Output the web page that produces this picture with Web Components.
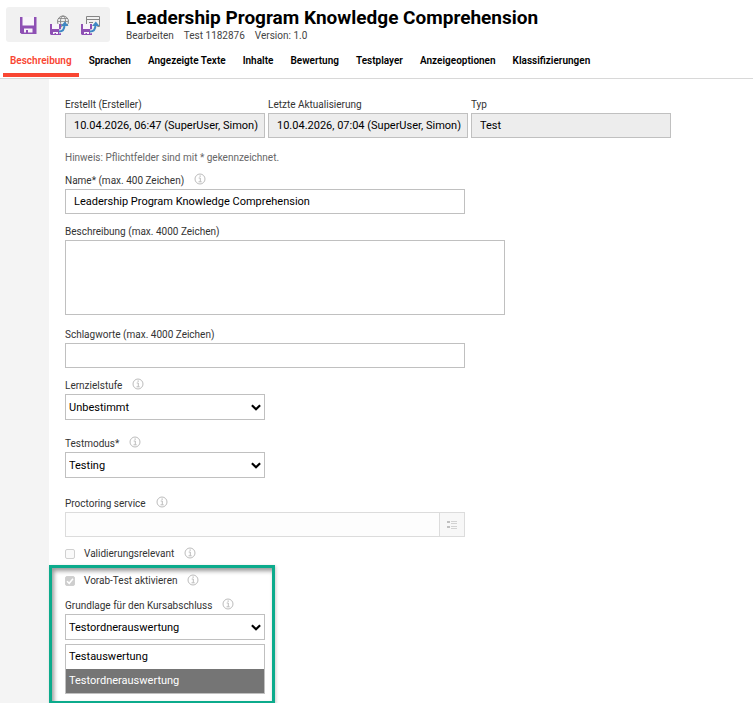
<!DOCTYPE html>
<html lang="de">
<head>
<meta charset="utf-8">
<meta name="viewport" content="width=device-width, initial-scale=1">
<title>Leadership Program Knowledge Comprehension</title>
<style>
  html, body { height: 100%; }
  body {
    margin: 0;
    background: #fff;
    color: #000;
    font-family: Roboto, "Liberation Sans", sans-serif;
    font-size: 11px;
    --label: #333;
    --line: #c0c0c0;
    --accent: #f94632;
  }
</style>
</head>
<body>
<test-editor></test-editor>

<script>
(() => {
  const FIELD_STYLES = `
    :host { display: block; }
    .head {
      height: 16px;
      display: flex;
      gap: 10px;
    }
    label {
      color: var(--label);
      font-size: 10px;
      line-height: 16px;
      white-space: nowrap;
    }
    input, textarea, select {
      width: 100%;
      box-sizing: border-box;
      margin: 0;
      border: 1px solid var(--line);
      border-radius: 0;
      background: #fff;
      color: #000;
      font: inherit;
      display: block;
    }
    input, select { height: 25px; }
  `;

  class BaseElement extends HTMLElement {
    constructor() {
      super();
      this.attachShadow({ mode: 'open' });
    }

    attr(name) {
      return this.getAttribute(name) || '';
    }

    connectedCallback() {
      this.shadowRoot.innerHTML = this.render();
    }
  }

  class InfoIcon extends BaseElement {
    render() {
      return `
        <style>
          :host { display: block; width: 12px; height: 12px; }
          svg { display: block; }
        </style>
        <svg width="12" height="12" viewBox="0 0 12 12" fill="none" stroke="#bcbcbc">
          <circle cx="6" cy="6" r="5" />
          <path d="M4.7 5H6.3V8.7M4.5 8.8H7.7" />
          <path d="M5.5 3.1H6.8" stroke-width="1.2" />
        </svg>
      `;
    }
  }

  class TextField extends BaseElement {
    render() {
      const value = this.attr('value');
      const state = this.hasAttribute('readonly') ? 'readonly' : this.hasAttribute('disabled') ? 'disabled' : '';
      const control = this.hasAttribute('multiline')
        ? `<textarea id="control">${value}</textarea>`
        : `<input id="control" type="text" value="${value}" ${state}>`;

      return `
        <style>
          ${FIELD_STYLES}
          input { padding: 0 0 0 8px; }
          input:read-only { background: #ededed; }
          input:disabled { border-color: #dcdcdc; background: #fdfdfd; }
          textarea { height: 75px; padding: 4px 8px; resize: none; }
          .row { display: flex; }
          .row input { flex: 1; min-width: 0; }
        </style>
        <div class="head">
          <label for="control">${this.attr('label')}</label>
          ${this.hasAttribute('info') ? '<info-icon></info-icon>' : ''}
        </div>
        <div class="row">${control}<slot></slot></div>
      `;
    }
  }

  class PickButton extends BaseElement {
    render() {
      return `
        <style>
          :host { display: block; }
          button {
            width: 26px;
            height: 25px;
            margin-left: -1px;
            padding: 0;
            border: 1px solid #dcdcdc;
            background: #f7f7f7;
            display: grid;
            place-items: center;
          }
        </style>
        <button type="button" aria-label="Proctoring service" disabled>
          <svg width="10" height="9" viewBox="0 0 10 9">
            <path d="M0 1H3V3H0ZM0 6H3V8H0Z" fill="#c0c0c0" />
            <path d="M4 1.500H10M4 3.500H10M4 6.500H10M4 8.500H10" stroke="#d2d2d2" />
          </svg>
        </button>
      `;
    }
  }

  class SelectField extends BaseElement {
    render() {
      return `
        <style>
          ${FIELD_STYLES}
          .box { display: grid; }
          .box > * { grid-area: 1 / 1; }
          select {
            height: 26px;
            padding: 0 20px 0 3px;
            appearance: none;
          }
          svg {
            align-self: center;
            justify-self: end;
            margin-right: 4px;
            pointer-events: none;
          }
        </style>
        <div class="head">
          <label for="control">${this.attr('label')}</label>
          <info-icon></info-icon>
        </div>
        <div class="box">
          <select id="control"><option>${this.attr('value')}</option></select>
          <svg width="10" height="7" viewBox="0 0 10 7" fill="none" stroke="#000" stroke-width="2.2">
            <path d="M.9 1.200L5 5.200L9.100 1.200" />
          </svg>
        </div>
      `;
    }
  }

  class OptionList extends BaseElement {
    render() {
      const selected = this.attr('selected');
      return `
        <style>
          :host { display: block; margin-top: 4px; }
          ul {
            margin: 0;
            padding: 0;
            border: 1px solid var(--line);
            background: #fff;
            list-style: none;
          }
          li { padding-left: 3px; line-height: 24px; }
          li[aria-selected="true"] { background: #757575; color: #fff; }
        </style>
        <ul role="listbox" aria-label="${this.attr('label')}">
          ${this.attr('options').split(',').map((name) => `
            <li role="option" aria-selected="${name === selected}">${name}</li>
          `).join('')}
        </ul>
      `;
    }
  }

  class CheckField extends BaseElement {
    render() {
      return `
        <style>
          :host { display: flex; gap: 10px; height: 14px; }
          label {
            color: var(--label);
            font-size: 10px;
            line-height: 14px;
            display: flex;
            align-items: center;
            gap: 9px;
          }
          input {
            width: 10px;
            height: 10px;
            margin: 0;
            border: 1px solid #d0d0d0;
            border-radius: 2px;
            background: #fafafa;
            appearance: none;
            display: grid;
            grid-area: 1 / 1;
          }
          input:checked { background: #cecece; }
          .box { display: grid; }
          svg { grid-area: 1 / 1; }
        </style>
        <label>
          <span class="box">
            <input type="checkbox" disabled ${this.hasAttribute('checked') ? 'checked' : ''}>
            ${this.hasAttribute('checked') ? `
              <svg width="10" height="10" viewBox="0 0 10 10" fill="none" stroke="#fff" stroke-width="1.500">
                <path d="M2 5.200L4.200 7.300L8 2.700" />
              </svg>` : ''}
          </span>
          <slot></slot>
        </label>
        <info-icon></info-icon>
      `;
    }
  }

  class MarkFrame extends BaseElement {
    render() {
      return `
        <style>
          :host {
            width: 200px;
            margin: 4px 0 0 -16px;
            padding: 6px 7px 7px 13px;
            border: 3px solid #0cab8c;
            box-shadow: 1px 1px 3px rgba(0, 0, 0, .2), inset 2px 3px 4px rgba(0, 0, 0, .4);
            display: block;
          }
        </style>
        <slot></slot>
      `;
    }
  }

  class SaveTools extends BaseElement {
    render() {
      const disk = `
        <path d="M3 10H14V21H4L3 20Z" fill="#8e50b4" />
        <path d="M5 10H12V15H5ZM6 18H11V20H9V19H7.500V20H6Z" fill="#f8f4fa" />`;
      const arrow = `
        <path d="M12 17.500C16 17.500 17.500 14.500 17.500 11" fill="none" stroke="#f1f1f1" stroke-width="4" />
        <path d="M12 17.500C16 17.500 17.500 14.500 17.500 11" fill="none" stroke="#3f87c4" stroke-width="2" />
        <path d="M14 12L17.800 7.500L21.500 12Z" fill="#3f87c4" />`;

      return `
        <style>
          :host {
            width: 104px;
            height: 35px;
            border-radius: 3px;
            background: #f1f1f1;
            display: flex;
            align-items: center;
            justify-content: center;
            gap: 9px;
          }
          button {
            width: 22px;
            height: 21px;
            padding: 0;
            border: 0;
            background: none;
          }
          svg { display: block; }
        </style>
        <button type="button" aria-label="Speichern">
          <svg width="22" height="21" viewBox="0 0 22 21">
            <path d="M4 3H20.500V20H5.500L4 18.500Z" fill="#8e50b4" />
            <path d="M6.500 3H18V11.500H6.500ZM8 14.500H16.500V18.500H12V16H10V18.500H8Z" fill="#f8f4fa" />
          </svg>
        </button>
        <button type="button" aria-label="Speichern und veröffentlichen">
          <svg width="22" height="21" viewBox="0 0 22 21">
            <g fill="none" stroke="#858585">
              <circle cx="16" cy="7.500" r="5.500" />
              <ellipse cx="16" cy="7.500" rx="2.500" ry="5.500" />
              <path d="M10.500 7.500H21.500M11.500 4.500H20.500M11.500 10.500H20.500" stroke-width=".8" />
            </g>
            ${disk}${arrow}
          </svg>
        </button>
        <button type="button" aria-label="Speichern und schließen">
          <svg width="22" height="21" viewBox="0 0 22 21">
            <path d="M8.500 10V2.500H21.500V12.500H19M8.500 5.500H21.500M11 8.500H15" fill="none" stroke="#858585" />
            ${disk}${arrow}
          </svg>
        </button>
      `;
    }
  }

  class PageHeader extends BaseElement {
    render() {
      return `
        <style>
          :host {
            padding: 7px 6px 0;
            display: flex;
            gap: 16px;
          }
          h1 {
            margin: 0;
            font-size: 19px;
            font-weight: 700;
            line-height: 22px;
          }
          p {
            margin: 0;
            color: #444;
            font-size: 10px;
            line-height: 14px;
            display: flex;
            gap: 10px;
          }
        </style>
        <save-tools></save-tools>
        <div>
          <h1>${this.attr('heading')}</h1>
          <p><slot></slot></p>
        </div>
      `;
    }
  }

  class TabBar extends BaseElement {
    render() {
      return `
        <style>
          :host { display: block; border-bottom: 1px solid #d8d8d8; }
          nav { padding: 2px 3px 1px; display: flex; gap: 3px; }
          a {
            padding: 8px 7px 4px;
            border-bottom: 4px solid transparent;
            color: #000;
            font-size: 10px;
            font-weight: 600;
            line-height: 16px;
            text-decoration: none;
            white-space: nowrap;
          }
          a[aria-current] { border-color: var(--accent); color: var(--accent); }
        </style>
        <nav>
          ${this.attr('tabs').split(',').map((tab, ndx) => `
            <a href="#" ${ndx === 0 ? 'aria-current="page"' : ''}>${tab}</a>
          `).join('')}
        </nav>
      `;
    }
  }

  class TestEditor extends BaseElement {
    render() {
      return `
        <style>
          :host { min-height: 100%; display: flex; flex-direction: column; }
          .body { flex: 1; display: flex; }
          aside { width: 49px; flex: none; background: #f4f4f4; }
          form { flex: 1; min-width: 0; padding: 18px 16px 0; }
          .meta { display: flex; gap: 3px; }
          .meta > * { width: 200px; }
          .hint { margin: 13px 0 8px; color: #666; font-size: 10px; line-height: 14px; }
          .medium { max-width: 400px; }
          .wide { max-width: 440px; }
          .small { max-width: 200px; }
          .gap-s { margin-top: 10px; }
          .gap-m { margin-top: 12px; }
          .gap-l { margin-top: 16px; }
          .gap-xl { margin-top: 18px; }
        </style>
        <page-header heading="Leadership Program Knowledge Comprehension">
          <span>Bearbeiten</span><span>Test 1182876</span><span>Version: 1.0</span>
        </page-header>
        <tab-bar tabs="Beschreibung,Sprachen,Angezeigte Texte,Inhalte,Bewertung,Testplayer,Anzeigeoptionen,Klassifizierungen"></tab-bar>
        <div class="body">
          <aside></aside>
          <form>
            <div class="meta">
              <text-field label="Erstellt (Ersteller)" value="10.04.2026, 06:47 (SuperUser, Simon)" readonly></text-field>
              <text-field label="Letzte Aktualisierung" value="10.04.2026, 07:04 (SuperUser, Simon)" readonly></text-field>
              <text-field label="Typ" value="Test" readonly></text-field>
            </div>
            <p class="hint">Hinweis: Pflichtfelder sind mit * gekennzeichnet.</p>
            <text-field class="medium" label="Name* (max. 400 Zeichen)" value="Leadership Program Knowledge Comprehension" info></text-field>
            <text-field class="wide gap-s" label="Beschreibung (max. 4000 Zeichen)" multiline></text-field>
            <text-field class="medium gap-m" label="Schlagworte (max. 4000 Zeichen)"></text-field>
            <select-field class="small gap-s" label="Lernzielstufe" value="Unbestimmt"></select-field>
            <select-field class="small gap-l" label="Testmodus*" value="Testing"></select-field>
            <text-field class="medium gap-xl" label="Proctoring service" disabled info>
              <pick-button></pick-button>
            </text-field>
            <check-field class="gap-s">Validierungsrelevant</check-field>
            <mark-frame>
              <check-field checked>Vorab-Test aktivieren</check-field>
              <select-field class="gap-s" label="Grundlage für den Kursabschluss" value="Testordnerauswertung"></select-field>
              <option-list label="Grundlage für den Kursabschluss" options="Testauswertung,Testordnerauswertung" selected="Testordnerauswertung"></option-list>
            </mark-frame>
          </form>
        </div>
      `;
    }
  }

  customElements.define('info-icon', InfoIcon);
  customElements.define('text-field', TextField);
  customElements.define('pick-button', PickButton);
  customElements.define('select-field', SelectField);
  customElements.define('option-list', OptionList);
  customElements.define('check-field', CheckField);
  customElements.define('mark-frame', MarkFrame);
  customElements.define('save-tools', SaveTools);
  customElements.define('page-header', PageHeader);
  customElements.define('tab-bar', TabBar);
  customElements.define('test-editor', TestEditor);
})();
</script>
</body>
</html>
